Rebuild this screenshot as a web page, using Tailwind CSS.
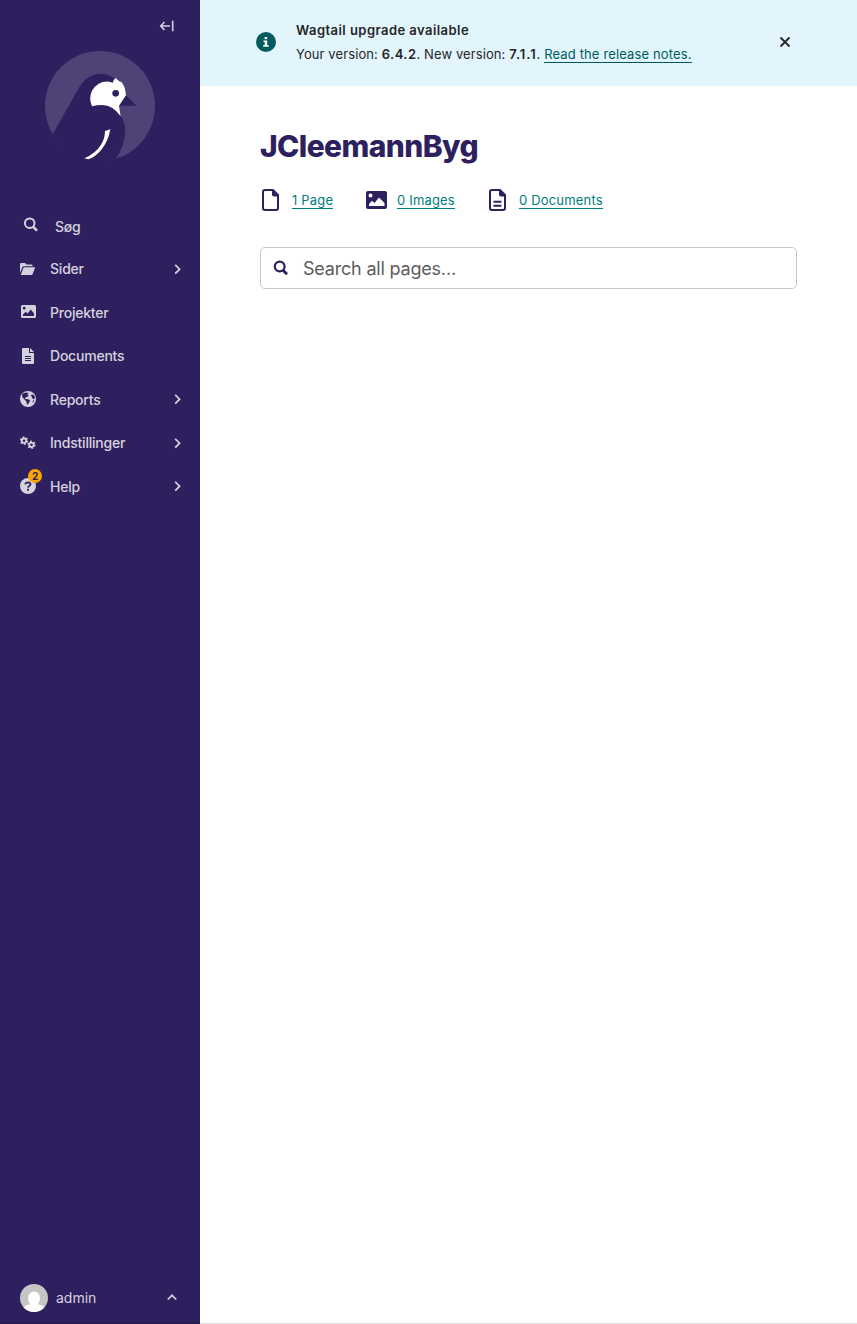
<!DOCTYPE html>
<html lang="en">
<head>
<meta charset="utf-8">
<title>Dashboard - JCleemannByg</title>
<script src="https://cdn.jsdelivr.net/npm/@tailwindcss/browser@4"></script>
</head>
<body class="flex h-[1324px] overflow-hidden bg-white font-['Inter',sans-serif] text-[#262626]">
<aside class="flex w-[200px] shrink-0 flex-col bg-[#2e1f5e] text-[14px] font-medium text-[#d5d2df]">
  <div class="flex h-[51px] justify-end pt-[18px] pr-[25px]">
    <svg class="h-4 w-4" viewBox="0 0 16 16" fill="none" stroke="currentColor" stroke-width="1.600"><path d="M11 8H2M5.500 4L1.700 8l3.800 4M13.700 2.800v10.500"/></svg>
  </div>
  <svg class="mx-auto h-[110px] w-[110px]" viewBox="45 33 330 330">
    <circle cx="210" cy="198" r="165" fill="#4f4277"/>
    <path fill="#2e1f5e" d="M68 283L146 145Q170 102 213 101Q240 102 262 122L288 165L319 197H266L271 226Q286 248 286 272Q283 323 256 357L210 366Q120 366 68 283Z"/>
    <path fill="#fff" d="M186 199Q175 174 186 152Q205 122 238 125L248 128Q250 119 257 114Q265 124 275 127Q286 141 288 166L267 197L272 229Q250 196 216 195Q200 195 186 199Z"/>
    <circle cx="257" cy="160" r="10" fill="#2e1f5e"/>
    <path fill="#fff" d="M225 273L241 268Q235 304 214 329Q197 350 175 358L163 355Q197 341 214 313Q225 294 225 273Z"/>
  </svg>
  <nav class="mt-[44px] flex flex-col tracking-[-0.22px]">
    <a class="flex h-[42px] items-center pl-[23px]">
      <svg class="mb-0.5 h-4 w-4" viewBox="0 0 16 16" fill="none" stroke="currentColor"><circle cx="6.700" cy="6.200" r="4.800" stroke-width="2"/><path d="M10 9.700L14 13.700" stroke-width="2.600"/></svg>
      <span class="ml-4 pt-px">Søg</span>
    </a>
    <a class="flex h-[43.500px] items-center pr-3.5 pl-5">
      <svg class="h-4 w-4" viewBox="0 0 16 16" fill="currentColor"><path d="M0 12V3.200Q0 2 1.200 2H5L6.500 3.500H11.500Q12.700 3.500 12.700 5.300H4Q2.800 5.300 2.200 6.500ZM.8 14L3.200 7.200Q3.500 6.300 4.500 6.300H15.200L12.700 13Q12.300 14 11.300 14Z"/></svg>
      <span class="ml-3.5 flex-1">Sider</span>
      <svg class="h-4 w-4" viewBox="0 0 16 16" fill="none" stroke="currentColor" stroke-width="1.700"><path d="M5.200 3.800L9.600 8.200L5.200 12.600"/></svg>
    </a>
    <a class="flex h-[43.500px] items-center pl-5">
      <svg class="h-4 w-4" viewBox="0 0 16 16" fill="currentColor"><path fill-rule="evenodd" d="M2.500 1H14.500Q16 1 16 2.500V12.500Q16 14 14.500 14H2.500Q1 14 1 12.500V2.500Q1 1 2.500 1ZM3 12H14V9.500L10.800 5.500L7.500 9.500L5.700 7.800L3 10.500ZM2.800 4.200A1.400 1.400 0 1 0 5.600 4.200A1.400 1.400 0 1 0 2.800 4.200Z"/></svg>
      <span class="ml-3.5">Projekter</span>
    </a>
    <a class="flex h-[43.500px] items-center pl-5">
      <svg class="h-4 w-4" viewBox="0 0 16 16" fill="currentColor"><path fill-rule="evenodd" d="M3 0H9V5H14V15Q14 16 13 16H3Q2 16 2 15V1Q2 0 3 0ZM10 0L14 4H10ZM5 8H11V9H5ZM5 10H11V11H5ZM5 12H11V13H5Z"/></svg>
      <span class="ml-3.5">Documents</span>
    </a>
    <a class="flex h-[43.500px] items-center pr-3.5 pl-5">
      <svg class="h-4 w-4" viewBox="0 0 16 16"><circle cx="8" cy="8" r="8" fill="currentColor"/><path fill="#2e1f5e" d="M2 3L4 2L7 1.500L8.500 2.200L7.200 3.500L9 4.500L7 6L5.500 6.500L5 8L8.500 8.300L10.200 9.800L9 11.800L7.800 13.500L6.800 13.200L6.500 10.700L4.500 8.500L2.500 6.500ZM11 3.500L13.500 3.700L15 6L14 8.500L12.500 7.500L11.500 5.500ZM13.500 9L14.200 9.500L13 12L12.500 11Z"/></svg>
      <span class="ml-3.5 flex-1">Reports</span>
      <svg class="h-4 w-4" viewBox="0 0 16 16" fill="none" stroke="currentColor" stroke-width="1.700"><path d="M5.200 3.800L9.600 8.200L5.200 12.600"/></svg>
    </a>
    <a class="flex h-[43.500px] items-center pr-3.5 pl-5">
      <svg class="h-4 w-4" viewBox="0 0 16 16" fill="none" stroke="currentColor"><circle cx="4" cy="5.700" r="2.200" stroke-width="1.800"/><circle cx="4" cy="5.700" r="3.500" stroke-width="1.400" stroke-dasharray="1.800 1.865"/><circle cx="11.500" cy="9.800" r="2.200" stroke-width="1.800"/><circle cx="11.500" cy="9.800" r="3.500" stroke-width="1.400" stroke-dasharray="1.800 1.865"/></svg>
      <span class="ml-3.5 flex-1">Indstillinger</span>
      <svg class="h-4 w-4" viewBox="0 0 16 16" fill="none" stroke="currentColor" stroke-width="1.700"><path d="M5.200 3.800L9.600 8.200L5.200 12.600"/></svg>
    </a>
    <a class="flex h-[43.500px] items-center pr-3.5 pl-5">
      <span class="relative h-4 w-4">
        <svg class="h-4 w-4" viewBox="0 0 16 16"><circle cx="8" cy="8" r="8" fill="currentColor"/><path fill="none" stroke="#2e1f5e" stroke-width="1.800" d="M5.300 6.400Q5.500 4.300 8 4.300Q10.500 4.400 10.500 6.300Q10.400 7.300 9.100 8Q8.100 8.500 8.100 9.700M8.100 10.800V12.700"/></svg>
        <span class="absolute -top-[9px] left-2 flex h-3.5 w-3.5 items-center justify-center rounded-full bg-[#faa500] text-[10px] font-bold text-[#2e1f5e]">2</span>
      </span>
      <span class="ml-3.5 flex-1">Help</span>
      <svg class="h-4 w-4" viewBox="0 0 16 16" fill="none" stroke="currentColor" stroke-width="1.700"><path d="M5.200 3.800L9.600 8.200L5.200 12.600"/></svg>
    </a>
  </nav>
  <div class="mt-auto flex h-[52px] items-center border-b border-[#261a4e] pr-5 pl-5 font-normal">
    <svg class="h-7 w-7 rounded-full" viewBox="0 0 28 28"><path fill="#c5c5c5" d="M0 0H28V28H0Z"/><ellipse cx="14" cy="14.500" rx="6" ry="7" fill="#fff"/><path fill="#fff" d="M10.500 18H17.500V20Q23 21 24.500 24V28H3.500V24Q5 21 10.500 20Z"/></svg>
    <span class="ml-2 flex-1">admin</span>
    <svg class="h-4 w-4" viewBox="0 0 16 16" fill="none" stroke="currentColor" stroke-width="1.700"><path d="M3.800 9.500L8 5.300L12.200 9.500"/></svg>
  </div>
</aside>
<main class="flex flex-1 flex-col border-b border-[#dedede]">
  <div class="flex h-[86px] items-center bg-[#e2f5fc] pr-[64px] pb-0.5 pl-[56px] text-[13px]">
    <svg class="h-5 w-5" viewBox="0 0 20 20"><circle cx="10" cy="10" r="10" fill="#005b5e"/><path fill="#fff" d="M8.600 5H11.200V7.200H8.600ZM7.500 8.400H11.200V13H12.600V14.700H7.300V13H8.700V10H7.500Z"/></svg>
    <div class="ml-5 flex-1 leading-6 tracking-[0.1px] whitespace-nowrap">
      <p class="font-semibold tracking-[0.45px]">Wagtail upgrade available</p>
      <p>Your version: <b class="font-semibold tracking-[0.45px]">6.4.2</b>. New version: <b class="font-semibold tracking-[0.9px]">7.1.1</b>. <a class="border-b border-[#005b5e] tracking-[0.14px] text-[#005b5e]">Read the release notes.</a></p>
    </div>
    <svg class="h-4 w-4" viewBox="0 0 16 16" fill="none" stroke="#262626" stroke-width="1.800"><path d="M3.500 3.500L12.500 12.500M12.500 3.500L3.500 12.500"/></svg>
  </div>
  <div class="px-[60px] pt-10">
    <h1 class="text-[30px] leading-10 font-extrabold tracking-[-0.6px] text-[#2e1f5e]">JCleemannByg</h1>
    <ul class="mt-[22px] flex h-6 items-center text-[13px] tracking-[0.18px] text-[#007d7e]">
      <li class="flex w-[105px] items-center">
        <svg class="h-[22px] w-[22px]" viewBox="0 0 22 22"><path fill="none" stroke="#2e1f5e" stroke-width="2" d="M5 1H13L18 6V19Q18 21 16 21H5Q3 21 3 19V3Q3 1 5 1Z"/><path fill="#2e1f5e" d="M12 1L18.500 7.500H14Q12 7.500 12 5.500Z"/></svg>
        <a class="ml-2.5 border-b border-[#007d7e] leading-4">1 Page</a>
      </li>
      <li class="flex w-[122px] items-center">
        <svg class="h-[22px] w-[22px]" viewBox="0 0 22 22"><path fill="#2e1f5e" fill-rule="evenodd" d="M3 2H20Q22 2 22 4V18Q22 20 20 20H3Q1 20 1 18V4Q1 2 3 2ZM4 17H19.500V14L14 8.500L9.500 14L7 11.700L4 15ZM3.500 6.500A2 2 0 1 0 7.500 6.500A2 2 0 1 0 3.500 6.500Z"/></svg>
        <a class="ml-2.5 border-b border-[#007d7e] leading-4">0 Images</a>
      </li>
      <li class="flex items-center">
        <svg class="h-[22px] w-[22px]" viewBox="0 0 22 22"><path fill="none" stroke="#2e1f5e" stroke-width="2" d="M5 1H13L18 6V19Q18 21 16 21H5Q3 21 3 19V3Q3 1 5 1ZM6.500 12.800H14.500M6.500 16.800H14.500"/><path fill="#2e1f5e" d="M12 1L18.500 7.500H14Q12 7.500 12 5.500Z"/></svg>
        <a class="ml-2.5 border-b border-[#007d7e] leading-4">0 Documents</a>
      </li>
    </ul>
    <div class="mt-[35px] flex h-[42px] items-center rounded-[5px] border border-[#c8c8c8] pl-3 text-[18px] tracking-[-0.2px] text-[#5c5c5c]">
      <svg class="h-4 w-4" viewBox="0 0 16 16" fill="none" stroke="#2e1f5e"><circle cx="6.700" cy="6.500" r="4.900" stroke-width="2.200"/><path d="M10 10.200L14 14.200" stroke-width="2.800"/></svg>
      <span class="ml-3.5">Search all pages…</span>
    </div>
  </div>
</main>
</body>
</html>
